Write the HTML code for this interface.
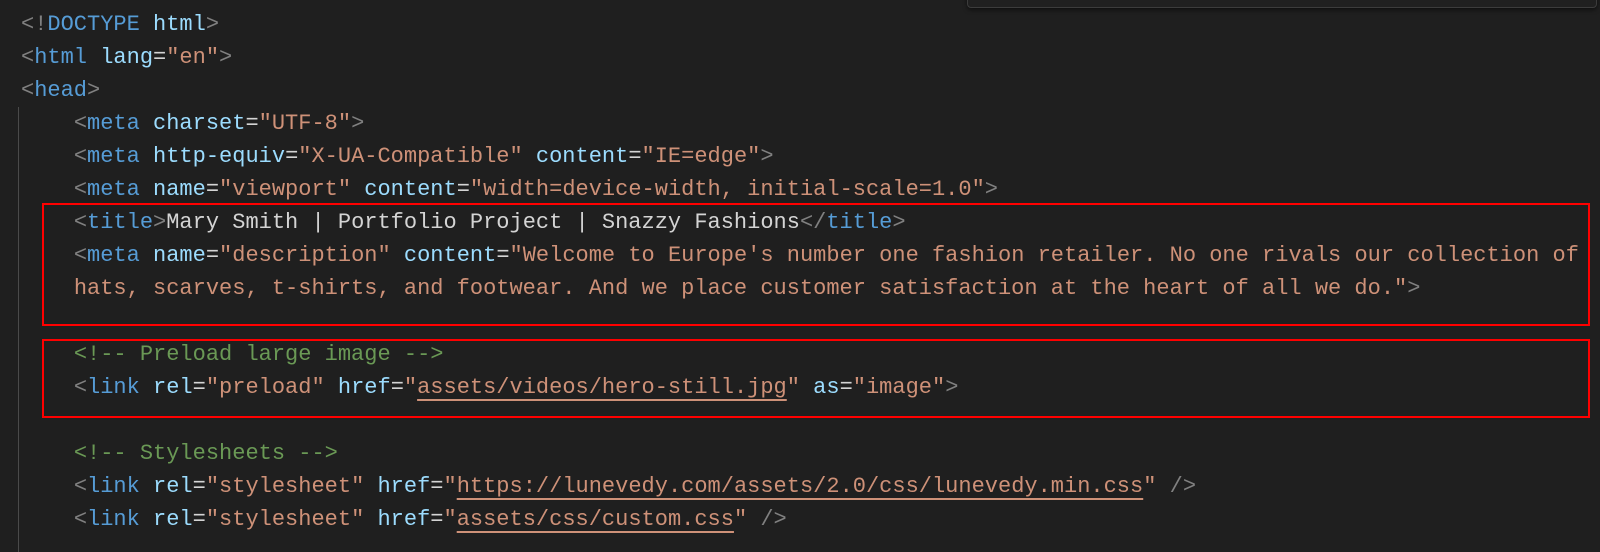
<!DOCTYPE html>
<html><head><style>
body{margin:0;width:1600px;height:552px;background:#1f1f1f;overflow:hidden;position:relative;font-family:"Liberation Mono",monospace;font-size:22px;}
.code{position:absolute;left:21px;top:8px;}
.l{height:33px;line-height:33px;white-space:pre;color:#d4d4d4;}
.p{color:#808080}.t{color:#569cd6}.a{color:#9cdcfe}.s{color:#ce9178}.c{color:#6a9955}
.u{text-decoration:underline;text-underline-offset:6px;text-decoration-thickness:2px}
.box{position:absolute;border:2px solid #ff0000;left:42px;width:1544px}
.guide{position:absolute;left:18px;top:107px;width:1px;height:445px;background:#4a4a4a}
.panel{position:absolute;left:967px;top:-10px;width:628px;height:16px;border:1px solid #3c3c3c;border-radius:4px;background:#202020;box-shadow:0 2px 4px rgba(0,0,0,.5)}
</style></head><body>
<div class="panel"></div>
<div class="guide"></div>
<div class="box" style="top:203px;height:119px"></div>
<div class="box" style="top:339px;height:75px"></div>
<div class="code">
<div class="l"><span class="p">&lt;!</span><span class="t">DOCTYPE</span> <span class="a">html</span><span class="p">&gt;</span></div>
<div class="l"><span class="p">&lt;</span><span class="t">html</span> <span class="a">lang</span>=<span class="s">"en"</span><span class="p">&gt;</span></div>
<div class="l"><span class="p">&lt;</span><span class="t">head</span><span class="p">&gt;</span></div>
<div class="l">    <span class="p">&lt;</span><span class="t">meta</span> <span class="a">charset</span>=<span class="s">"UTF-8"</span><span class="p">&gt;</span></div>
<div class="l">    <span class="p">&lt;</span><span class="t">meta</span> <span class="a">http-equiv</span>=<span class="s">"X-UA-Compatible"</span> <span class="a">content</span>=<span class="s">"IE=edge"</span><span class="p">&gt;</span></div>
<div class="l">    <span class="p">&lt;</span><span class="t">meta</span> <span class="a">name</span>=<span class="s">"viewport"</span> <span class="a">content</span>=<span class="s">"width=device-width, initial-scale=1.0"</span><span class="p">&gt;</span></div>
<div class="l">    <span class="p">&lt;</span><span class="t">title</span><span class="p">&gt;</span>Mary Smith | Portfolio Project | Snazzy Fashions<span class="p">&lt;/</span><span class="t">title</span><span class="p">&gt;</span></div>
<div class="l">    <span class="p">&lt;</span><span class="t">meta</span> <span class="a">name</span>=<span class="s">"description"</span> <span class="a">content</span>=<span class="s">"Welcome to Europe's number one fashion retailer. No one rivals our collection of</span></div>
<div class="l">    <span class="s">hats, scarves, t-shirts, and footwear. And we place customer satisfaction at the heart of all we do."</span><span class="p">&gt;</span></div>
<div class="l"> </div>
<div class="l">    <span class="c">&lt;!-- Preload large image --&gt;</span></div>
<div class="l">    <span class="p">&lt;</span><span class="t">link</span> <span class="a">rel</span>=<span class="s">"preload"</span> <span class="a">href</span>=<span class="s">"<span class="u">assets/videos/hero-still.jpg</span>"</span> <span class="a">as</span>=<span class="s">"image"</span><span class="p">&gt;</span></div>
<div class="l"> </div>
<div class="l">    <span class="c">&lt;!-- Stylesheets --&gt;</span></div>
<div class="l">    <span class="p">&lt;</span><span class="t">link</span> <span class="a">rel</span>=<span class="s">"stylesheet"</span> <span class="a">href</span>=<span class="s">"<span class="u">https://lunevedy.com/assets/2.0/css/lunevedy.min.css</span>"</span> <span class="p">/&gt;</span></div>
<div class="l">    <span class="p">&lt;</span><span class="t">link</span> <span class="a">rel</span>=<span class="s">"stylesheet"</span> <span class="a">href</span>=<span class="s">"<span class="u">assets/css/custom.css</span>"</span> <span class="p">/&gt;</span></div>
</div>
</body></html>
